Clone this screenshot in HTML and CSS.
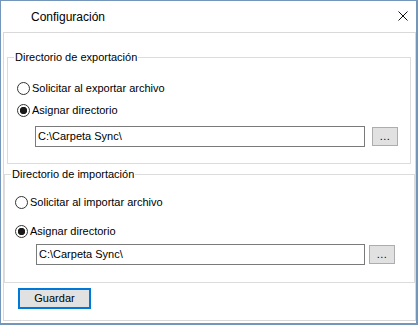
FILE: index.html
```html
<!DOCTYPE html>
<html lang="es">
<head>
<meta charset="utf-8">
<title>Configuración</title>
<link rel="stylesheet" href="styles.css">
</head>
<body>
<div class="window">
  <div class="titlebar">
    <span class="title">Configuración</span>
    <span class="close" aria-label="Cerrar">
      <svg width="10" height="10" viewBox="0 0 10 10"><path d="M0.5 0.5L9.5 9.5M9.5 0.5L0.5 9.5" stroke="#111" stroke-width="1" fill="none"/></svg>
    </span>
  </div>
  <div class="client">
    <div class="group group-export">
      <div class="legend">Directorio de exportación</div>
      <div class="radio-row row-a"><span class="radio"></span><span class="label">Solicitar al exportar archivo</span></div>
      <div class="radio-row row-b"><span class="radio checked"></span><span class="label">Asignar directorio</span></div>
      <div class="path-row">
        <div class="textbox">C:\Carpeta Sync\</div>
        <div class="browse">...</div>
      </div>
    </div>
    <div class="group group-import">
      <div class="legend">Directorio de importación</div>
      <div class="radio-row row-a"><span class="radio"></span><span class="label">Solicitar al importar archivo</span></div>
      <div class="radio-row row-b"><span class="radio checked"></span><span class="label">Asignar directorio</span></div>
      <div class="path-row">
        <div class="textbox">C:\Carpeta Sync\</div>
        <div class="browse">...</div>
      </div>
    </div>
    <div class="footer">
      <div class="save">Guardar</div>
    </div>
  </div>
</div>
</body>
</html>
```

FILE: styles.css
```css
* { box-sizing: border-box; }

body {
  margin: 0;
  background: #fff;
  font-family: "Liberation Sans", Arial, sans-serif;
  font-size: 11px;
  color: #000;
}

.window {
  width: 418px;
  height: 325px;
  border-style: solid;
  border-color: #7496ba;
  border-width: 1px 2px 2px 1px;
  background: #fff;
  display: flex;
  flex-direction: column;
}

.titlebar {
  height: 31px;
  flex: none;
  display: flex;
  align-items: center;
  justify-content: space-between;
  padding: 0 8px 0 30px;
}

.title {
  font-size: 12px;
  line-height: 16px;
  padding-top: 1px;
}

.close {
  width: 10px;
  height: 10px;
  display: flex;
  margin-top: -1px;
}

.close svg { display: block; }

.client {
  flex: 1;
  margin: 0 0 2px 2px;
  border: 1px solid #d9d9d9;
  display: flex;
  flex-direction: column;
  align-items: flex-start;
}

.group {
  border: 1px solid #dcdcdc;
  display: flex;
  flex-direction: column;
  align-items: flex-start;
}

.legend {
  margin: -9px 0 0 6px;
  padding: 0 1px;
  height: 16px;
  line-height: 16px;
  background: #fff;
}

.radio-row {
  height: 22px;
  display: flex;
  align-items: center;
  gap: 2px;
}

.radio {
  width: 13px;
  height: 13px;
  border: 1px solid #333;
  border-radius: 50%;
  background: #fff;
  flex: none;
}

.radio.checked {
  background: radial-gradient(circle, #1a1a1a 0 3.4px, #fff 4px);
}

.label { line-height: 16px; }

.path-row {
  display: flex;
  align-items: center;
}

.textbox {
  height: 21px;
  border: 1px solid #7a7a7a;
  background: #fff;
  padding: 0 2px;
  line-height: 19px;
  white-space: nowrap;
}

.browse {
  width: 26px;
  height: 19px;
  border: 1px solid #adadad;
  background: #e1e1e1;
  text-align: center;
  line-height: 16px;
  letter-spacing: 0.5px;
}

/* export group */
.group-export {
  margin: 24px 0 0 3px;
  width: 404px;
  padding: 0 0 16px 9px;
}
.group-export .legend { margin-left: -3px; }
.group-export .row-a { margin-top: 12px; }
.group-export .path-row { margin: 5px 0 0 18px; }
.group-export .textbox { width: 330px; }
.group-export .browse { margin-left: 7px; }

/* import group */
.group-import {
  margin: 10px 0 0 0;
  width: 411px;
  padding: 0 0 17px 10px;
}
.group-import .legend { margin-left: -4px; }
.group-import .row-a { margin-top: 9px; }
.group-import .row-b { margin-top: 7px; }
.group-import .path-row { margin: 2px 0 0 21px; }
.group-import .textbox { width: 329px; }
.group-import .browse { margin-left: 4px; }

.footer {
  margin: 5px 0 0 14px;
}

.save {
  width: 73px;
  height: 21px;
  border: 2px solid #0078d7;
  background: #e1e1e1;
  text-align: center;
  line-height: 17px;
}
```
